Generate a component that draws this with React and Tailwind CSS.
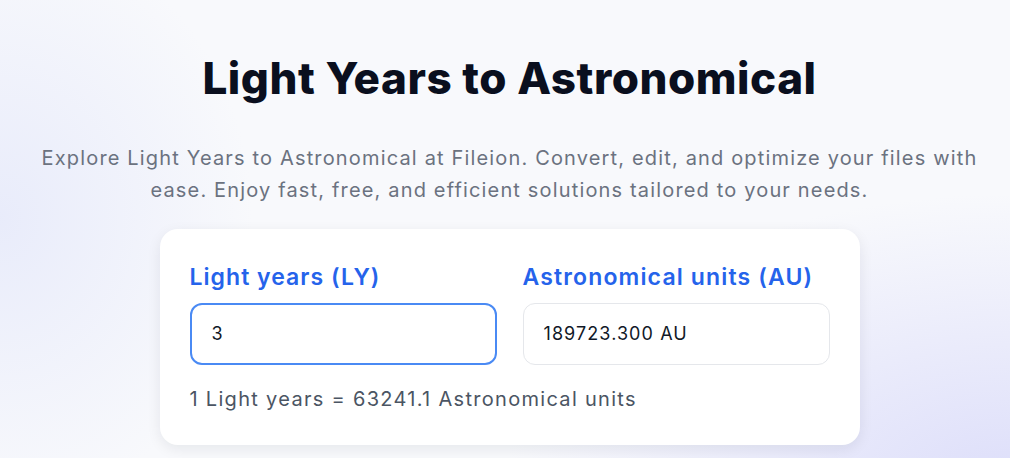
import React, { useState } from "react";

const LY_TO_AU = 63241.1;

export default function App() {
  const [lightYears, setLightYears] = useState("3");
  const au = (parseFloat(lightYears) || 0) * LY_TO_AU;

  return (
    <div
      className="min-h-screen w-full bg-[#f8f9fc] bg-[radial-gradient(ellipse_25%_60%_at_0%_45%,rgba(226,230,250,0.7),transparent),radial-gradient(ellipse_50%_60%_at_100%_100%,rgba(221,222,250,1),transparent)] pl-[9px] pt-[50px] pb-10"
      style={{ fontFamily: "Inter, 'Noto Sans', sans-serif" }}
    >
      {/* Heading */}
      <h1 className="text-center text-[44px] leading-[56px] font-extrabold tracking-[0.012em] text-[#0a0f1e]">
        Light Years to Astronomical
      </h1>
      <p className="mx-auto mt-[36px] max-w-[960px] text-center text-[20px] leading-[32px] tracking-[0.058em] text-[#6b7280]">
        Explore Light Years to Astronomical at Fileion. Convert, edit, and optimize your files with
        ease. Enjoy fast, free, and efficient solutions tailored to your needs.
      </p>

      {/* Converter card */}
      <div className="mx-auto mt-[23px] w-[700px] rounded-[18px] bg-white px-[30px] pt-8 pb-8 shadow-[0_4px_14px_rgba(15,23,42,0.08)]">
        <div className="grid grid-cols-2 gap-x-[26px]">
          <div>
            <label className="block text-[23px] leading-[32px] font-semibold tracking-[0.045em] text-[#2563eb]">
              Light years (LY)
            </label>
            <input
              type="text"
              value={lightYears}
              onChange={(e) => setLightYears(e.target.value)}
              className="mt-2.5 w-full rounded-xl border-2 border-[#4a8af4] bg-white px-5 py-[15px] text-lg leading-7 tracking-[0.06em] text-[#111827] outline-none"
            />
          </div>
          <div>
            <label className="block text-[23px] leading-[32px] font-semibold tracking-[0.05em] text-[#2563eb]">
              Astronomical units (AU)
            </label>
            <div className="mt-2.5 w-full rounded-xl border border-[#e5e7eb] bg-white px-5 py-4 text-lg leading-7 tracking-[0.06em] text-[#111827]">
              {au.toFixed(3)} AU
            </div>
          </div>
        </div>
        <p className="mt-5 text-[20px] leading-7 tracking-[0.065em] text-[#4b5563]">
          1 Light years = 63241.1 Astronomical units
        </p>
      </div>
    </div>
  );
}
